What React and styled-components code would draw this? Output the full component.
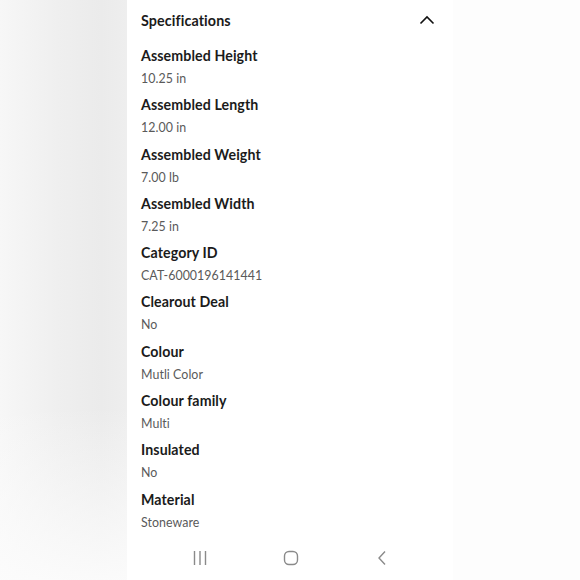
import React from "react";
import styled, { createGlobalStyle } from "styled-components";

const Global = createGlobalStyle`
  html, body { margin: 0; padding: 0; background: #fdfdfd; }
  body { font-family: Lato, "Noto Sans", "Liberation Sans", sans-serif; }
`;

const Page = styled.div`
  display: flex;
  width: 580px;
  height: 580px;
  overflow: hidden;
`;

const SideBlur = styled.div`
  width: ${(p) => p.$w}px;
  flex: none;
  background: ${(p) => p.$bg};
`;

const Panel = styled.div`
  width: 326px;
  flex: none;
  background: #ffffff;
  display: flex;
  flex-direction: column;
`;

const Header = styled.div`
  height: 40px;
  display: flex;
  align-items: center;
  justify-content: space-between;
  padding: 0 18px 0 14px;
`;

const HeaderTitle = styled.h2`
  margin: 0;
  font-size: 14.3px;
  font-weight: 700;
  color: #1b1b1b;
  letter-spacing: 0.1px;
`;

const List = styled.dl`
  margin: 0;
  padding: 6px 14px 0;
  display: flex;
  flex-direction: column;
  gap: 6.3px;
`;

const Item = styled.div`
  display: flex;
  flex-direction: column;
  gap: 3px;
`;

const Label = styled.dt`
  font-size: 14.2px;
  line-height: 20px;
  font-weight: 700;
  color: #1b1b1b;
  letter-spacing: 0.1px;
`;

const Value = styled.dd`
  margin: 0;
  font-size: 12.4px;
  line-height: 20px;
  color: #5a5a5a;
  letter-spacing: 0.05px;
`;

const NavBar = styled.nav`
  margin-top: auto;
  height: 44px;
  display: flex;
  align-items: center;
  justify-content: center;
  gap: 71px;
  padding-left: 1px;
`;

const NavButton = styled.div`
  width: 20px;
  height: 20px;
  display: flex;
  align-items: center;
  justify-content: center;
  color: #8a8a8a;
`;

const specs = [
  ["Assembled Height", "10.25 in"],
  ["Assembled Length", "12.00 in"],
  ["Assembled Weight", "7.00 lb"],
  ["Assembled Width", "7.25 in"],
  ["Category ID", "CAT-6000196141441"],
  ["Clearout Deal", "No"],
  ["Colour", "Mutli Color"],
  ["Colour family", "Multi"],
  ["Insulated", "No"],
  ["Material", "Stoneware"],
];

export default function App() {
  return (
    <>
      <Global />
      <Page>
        <SideBlur
          $w={127}
          $bg="linear-gradient(to bottom, rgba(255,255,255,0) 70%, rgba(252,252,252,0.9) 100%), linear-gradient(to right, #f7f7f7 0%, #efefef 45%, #ebebeb 80%, #eeeeee 100%)"
        />
        <Panel>
          <Header>
            <HeaderTitle>Specifications</HeaderTitle>
            <svg width="16" height="10" viewBox="0 0 16 10" fill="none">
              <path d="M1.5 8.5 L8 2 L14.5 8.5" stroke="#111" strokeWidth="1.6" />
            </svg>
          </Header>
          <List>
            {specs.map(([k, v]) => (
              <Item key={k}>
                <Label>{k}</Label>
                <Value>{v}</Value>
              </Item>
            ))}
          </List>
          <NavBar>
            <NavButton>
              <svg width="16" height="16" viewBox="0 0 16 16">
                <path d="M2.5 1 V15 M8 1 V15 M13.5 1 V15" stroke="currentColor" strokeWidth="1.4" />
              </svg>
            </NavButton>
            <NavButton>
              <svg width="16" height="16" viewBox="0 0 16 16" fill="none">
                <rect x="1.5" y="1.5" width="13" height="13" rx="4.5" stroke="currentColor" strokeWidth="1.4" />
              </svg>
            </NavButton>
            <NavButton>
              <svg width="12" height="16" viewBox="0 0 12 16" fill="none">
                <path d="M9 1.5 L3 8 L9 14.5" stroke="currentColor" strokeWidth="1.4" />
              </svg>
            </NavButton>
          </NavBar>
        </Panel>
        <SideBlur $w={127} $bg="#fdfdfd" />
      </Page>
    </>
  );
}
